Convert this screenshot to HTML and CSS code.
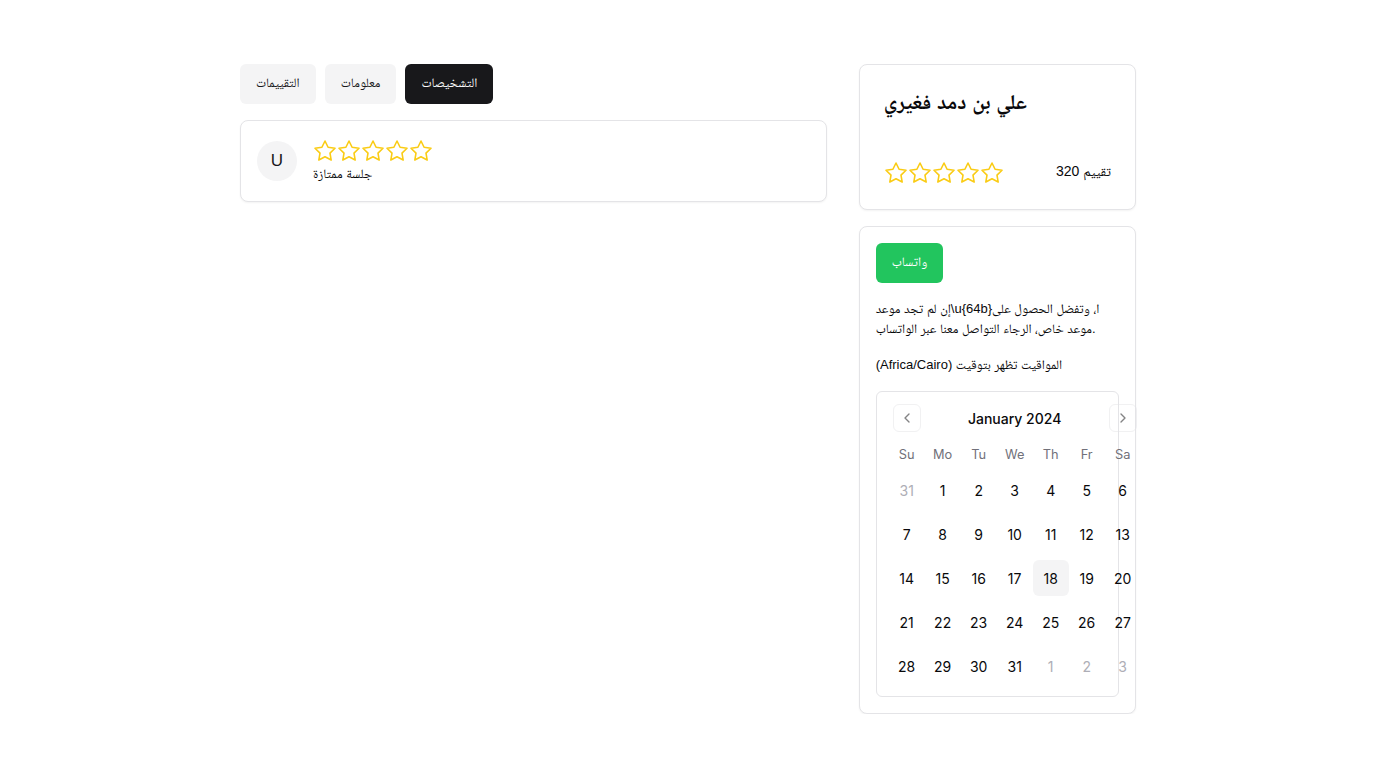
FILE: index.html
```html
<!DOCTYPE html>
<html lang="ar">
<head>
<meta charset="utf-8">
<link rel="stylesheet" href="styles.css">
</head>
<body>
<main class="page">
  <section class="main-col">
    <div class="tabs">
      <button class="tab">التقييمات</button>
      <button class="tab">معلومات</button>
      <button class="tab active">التشخيصات</button>
    </div>
    <div class="review card">
      <div class="avatar">U</div>
      <div class="review-body">
        <div class="stars">
          <svg viewBox="0 0 24 24"><polygon points="12 2 15.09 8.26 22 9.27 17 14.14 18.18 21.02 12 17.77 5.82 21.02 7 14.14 2 9.27 8.91 8.26 12 2"/></svg>
          <svg viewBox="0 0 24 24"><polygon points="12 2 15.09 8.26 22 9.27 17 14.14 18.18 21.02 12 17.77 5.82 21.02 7 14.14 2 9.27 8.91 8.26 12 2"/></svg>
          <svg viewBox="0 0 24 24"><polygon points="12 2 15.09 8.26 22 9.27 17 14.14 18.18 21.02 12 17.77 5.82 21.02 7 14.14 2 9.27 8.91 8.26 12 2"/></svg>
          <svg viewBox="0 0 24 24"><polygon points="12 2 15.09 8.26 22 9.27 17 14.14 18.18 21.02 12 17.77 5.82 21.02 7 14.14 2 9.27 8.91 8.26 12 2"/></svg>
          <svg viewBox="0 0 24 24"><polygon points="12 2 15.09 8.26 22 9.27 17 14.14 18.18 21.02 12 17.77 5.82 21.02 7 14.14 2 9.27 8.91 8.26 12 2"/></svg>
        </div>
        <p class="review-text">جلسة ممتازة</p>
      </div>
    </div>
  </section>

  <aside class="side-col">
    <div class="card profile">
      <h1 class="name">علي بن دمد فغيري</h1>
      <div class="rating-row">
        <div class="stars">
          <svg viewBox="0 0 24 24"><polygon points="12 2 15.09 8.26 22 9.27 17 14.14 18.18 21.02 12 17.77 5.82 21.02 7 14.14 2 9.27 8.91 8.26 12 2"/></svg>
          <svg viewBox="0 0 24 24"><polygon points="12 2 15.09 8.26 22 9.27 17 14.14 18.18 21.02 12 17.77 5.82 21.02 7 14.14 2 9.27 8.91 8.26 12 2"/></svg>
          <svg viewBox="0 0 24 24"><polygon points="12 2 15.09 8.26 22 9.27 17 14.14 18.18 21.02 12 17.77 5.82 21.02 7 14.14 2 9.27 8.91 8.26 12 2"/></svg>
          <svg viewBox="0 0 24 24"><polygon points="12 2 15.09 8.26 22 9.27 17 14.14 18.18 21.02 12 17.77 5.82 21.02 7 14.14 2 9.27 8.91 8.26 12 2"/></svg>
          <svg viewBox="0 0 24 24"><polygon points="12 2 15.09 8.26 22 9.27 17 14.14 18.18 21.02 12 17.77 5.82 21.02 7 14.14 2 9.27 8.91 8.26 12 2"/></svg>
        </div>
        <span class="count">تقييم 320</span>
      </div>
    </div>

    <div class="card booking">
      <div><button class="whatsapp">واتساب</button></div>
      <p class="note">إن لم تجد موعد\u{64b}ا، وتفضل الحصول على<br>موعد خاص، الرجاء التواصل معنا عبر الواتساب.</p>
      <p class="note">(Africa/Cairo) المواقيت تظهر بتوقيت</p>
      <div class="calendar">
        <div class="cal-inner">
          <div class="caption">
            <button class="nav prev"><svg viewBox="0 0 24 24"><path d="m15 18-6-6 6-6"/></svg></button>
            <span class="month">January 2024</span>
            <button class="nav next"><svg viewBox="0 0 24 24"><path d="m9 18 6-6-6-6"/></svg></button>
          </div>
          <div class="grid head">
            <span>Su</span><span>Mo</span><span>Tu</span><span>We</span><span>Th</span><span>Fr</span><span>Sa</span>
          </div>
          <div class="grid days">
            <span class="out">31</span><span>1</span><span>2</span><span>3</span><span>4</span><span>5</span><span>6</span>
          </div>
          <div class="grid days">
            <span>7</span><span>8</span><span>9</span><span>10</span><span>11</span><span>12</span><span>13</span>
          </div>
          <div class="grid days">
            <span>14</span><span>15</span><span>16</span><span>17</span><span class="today">18</span><span>19</span><span>20</span>
          </div>
          <div class="grid days">
            <span>21</span><span>22</span><span>23</span><span>24</span><span>25</span><span>26</span><span>27</span>
          </div>
          <div class="grid days">
            <span>28</span><span>29</span><span>30</span><span>31</span><span class="out">1</span><span class="out">2</span><span class="out">3</span>
          </div>
        </div>
      </div>
    </div>
  </aside>
</main>
</body>
</html>
```

FILE: styles.css
```css
* { box-sizing: border-box; }
html, body { margin: 0; padding: 0; background: #fff; }
body {
  font-family: "Liberation Sans", Arial, "Noto Naskh Arabic", "Noto Sans Arabic", "DejaVu Sans", sans-serif;
  color: #09090b;
  font-size: 14px;
}
.page {
  width: 896px;
  margin: 0 auto;
  padding-top: 64px;
  display: grid;
  grid-template-columns: repeat(3, minmax(0, 1fr));
  column-gap: 32px;
  align-items: start;
}
.main-col { grid-column: span 2; display: flex; flex-direction: column; gap: 16px; }
.side-col { display: flex; flex-direction: column; gap: 16px; }

.tabs { display: flex; gap: 9px; }
.tab {
  height: 40px;
  padding: 0 16px;
  border: none;
  border-radius: 6px;
  background: #f4f4f5;
  color: #18181b;
  font-family: inherit;
  font-size: 13px;
}
.tab.active { background: #18181b; color: #fafafa; }

.card {
  border: 1px solid #e4e4e7;
  border-radius: 8px;
  background: #fff;
  box-shadow: 0 1px 2px rgba(0,0,0,0.05);
}
.review { display: flex; align-items: center; gap: 16px; padding: 16px; height: 82px; }
.avatar {
  width: 40px; height: 40px; border-radius: 50%;
  background: #f4f4f5;
  display: flex; align-items: center; justify-content: center;
  font-size: 17px; color: #18181b;
}
.review-body { display: flex; flex-direction: column; align-items: flex-start; }
.stars { display: flex; }
.stars svg {
  width: 24px; height: 24px;
  fill: none; stroke: #facc15; stroke-width: 1.6; stroke-linejoin: round;
}
.review-text { margin: 1px 0 0; font-size: 13px; line-height: 20px; }

.profile { padding: 24px; height: 146px; display: flex; flex-direction: column; justify-content: space-between; }
.name { margin: 0; font-size: 21px; line-height: 26px; font-weight: 700; text-align: left; }
.rating-row { display: flex; align-items: center; justify-content: space-between; }
.count { font-size: 14px; }

.booking { padding: 16px; display: flex; flex-direction: column; gap: 16px; }
.whatsapp {
  height: 40px; padding: 0 16px;
  border: none; border-radius: 6px;
  background: #22c55e; color: #fff;
  font-family: inherit; font-size: 13px;
}
.note { margin: 0; font-size: 13px; line-height: 20px; text-align: left; white-space: nowrap; }

.calendar {
  border: 1px solid #e4e4e7;
  border-radius: 6px;
  padding: 12px;
  font-family: Inter, "Liberation Sans", sans-serif;
}
.cal-inner { width: 252px; }
.caption {
  position: relative;
  height: 28px;
  display: flex; align-items: center; justify-content: center;
  margin-bottom: 16px;
}
.month { font-size: 14px; font-weight: 500; }
.nav {
  position: absolute; top: 0;
  width: 28px; height: 28px; padding: 0;
  border: 1px solid #e4e4e7; border-radius: 6px;
  background: transparent; opacity: 0.5;
  display: flex; align-items: center; justify-content: center;
}
.nav.prev { left: 4px; }
.nav.next { right: 4px; }
.nav svg { width: 16px; height: 16px; fill: none; stroke: #09090b; stroke-width: 2; stroke-linecap: round; stroke-linejoin: round; }
.grid { display: grid; grid-template-columns: repeat(7, 36px); }
.head { height: 16px; margin-bottom: 8px; }
.head span { text-align: center; font-size: 12.8px; line-height: 14px; color: #71717a; }
.days { margin-bottom: 8px; }
.days:last-child { margin-bottom: 0; }
.days span {
  height: 36px; display: flex; align-items: center; justify-content: center;
  font-size: 14px; border-radius: 6px;
}
.days .out { color: #a1a1aa; opacity: 0.85; }
.days .today { background: #f4f4f5; }
```
